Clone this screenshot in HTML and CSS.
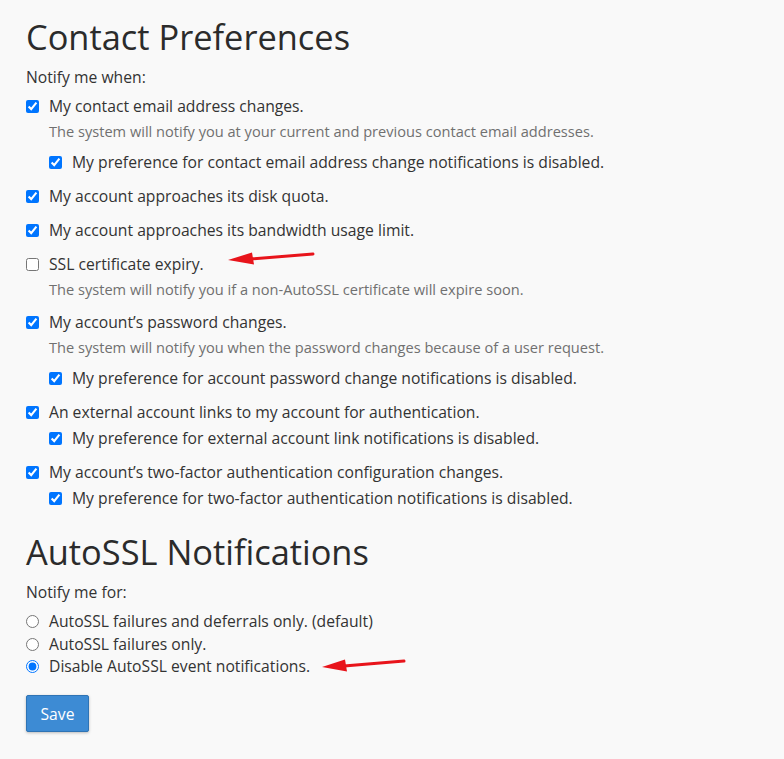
FILE: index.html
```html
<!DOCTYPE html>
<html>
<head>
<meta charset="utf-8">
<link rel="stylesheet" href="styles.css">
</head>
<body>
<div class="page">
  <h2 class="title">Contact Preferences</h2>
  <p class="lead">Notify me when:</p>

  <div class="group">
    <label class="opt"><input type="checkbox" checked> My contact email address changes.</label>
    <p class="desc">The system will notify you at your current and previous contact email addresses.</p>
    <label class="opt sub"><input type="checkbox" checked> My preference for contact email address change notifications is disabled.</label>
  </div>

  <div class="group">
    <label class="opt"><input type="checkbox" checked> My account approaches its disk quota.</label>
  </div>

  <div class="group">
    <label class="opt"><input type="checkbox" checked> My account approaches its bandwidth usage limit.</label>
  </div>

  <div class="group rel">
    <label class="opt"><input type="checkbox"> SSL certificate expiry.</label>
    <p class="desc last">The system will notify you if a non-AutoSSL certificate will expire soon.</p>
    <svg class="arrow arrow1" width="90" height="14" viewBox="0 0 90 14"><path d="M86 3 L24 8" stroke="#e8141b" stroke-width="3" stroke-linecap="round" fill="none"/><path d="M1 9 L25 1.5 L27 13.5 Z" fill="#e8141b"/></svg>
  </div>

  <div class="group">
    <label class="opt"><input type="checkbox" checked> My account’s password changes.</label>
    <p class="desc">The system will notify you when the password changes because of a user request.</p>
    <label class="opt sub"><input type="checkbox" checked> My preference for account password change notifications is disabled.</label>
  </div>

  <div class="group">
    <label class="opt"><input type="checkbox" checked> An external account links to my account for authentication.</label>
    <label class="opt sub tight"><input type="checkbox" checked> My preference for external account link notifications is disabled.</label>
  </div>

  <div class="group">
    <label class="opt"><input type="checkbox" checked> My account’s two-factor authentication configuration changes.</label>
    <label class="opt sub tight"><input type="checkbox" checked> My preference for two-factor authentication notifications is disabled.</label>
  </div>

  <h2 class="title title2">AutoSSL Notifications</h2>
  <p class="lead">Notify me for:</p>
  <div class="radios">
    <label class="ropt"><input type="radio" name="a"> AutoSSL failures and deferrals only. (default)</label>
    <label class="ropt"><input type="radio" name="a"> AutoSSL failures only.</label>
    <label class="ropt rel"><input type="radio" name="a" checked> Disable AutoSSL event notifications.
      <svg class="arrow arrow2" width="86" height="14" viewBox="0 0 86 14"><path d="M82 3 L22 8" stroke="#e8141b" stroke-width="3" stroke-linecap="round" fill="none"/><path d="M0 9 L23 1.5 L25 13.5 Z" fill="#e8141b"/></svg>
    </label>
  </div>
  <button class="save">Save</button>
</div>
</body>
</html>
```
FILE: styles.css
```css
html, body {
  margin: 0;
  padding: 0;
  background: #f9f9f9;
}
body {
  font-family: "Open Sans", "Liberation Sans", sans-serif;
  color: #333;
}
.page {
  padding: 15px 26px 20px 26px;
}
.title {
  font-size: 34.4px;
  font-weight: 400;
  line-height: 44px;
  margin: 0 0 8px 0;
  color: #2b2b2b;
}
.title2 {
  margin-top: 21px;
}
.lead {
  font-size: 15.7px;
  line-height: 20px;
  margin: 0 0 9px 0;
}
.group {
  margin-bottom: 13px;
}
.rel { position: relative; }
.opt {
  display: flex;
  align-items: center;
  font-size: 15.7px;
  line-height: 21px;
  height: 21px;
  white-space: nowrap;
}
.opt input, .ropt input {
  margin: 0 10px 0 0;
  width: 13px;
  height: 13px;
  flex: none;
}
.sub {
  margin-left: 23px;
}
.tight {
  margin-top: 5px;
}
.desc {
  font-size: 14.6px;
  line-height: 20px;
  color: #707070;
  margin: 4px 0 11px 23px;
  white-space: nowrap;
}
.desc.last {
  margin-bottom: 0;
}
.radios {
  display: flex;
  flex-direction: column;
  gap: 1.5px;
}
.ropt {
  display: flex;
  align-items: center;
  font-size: 15.7px;
  line-height: 21px;
  height: 21px;
  white-space: nowrap;
}
.arrow {
  position: absolute;
}
.arrow1 {
  left: 201px;
  top: -3px;
}
.arrow2 {
  left: 296px;
  top: 2px;
}
.save {
  margin-top: 18px;
  font-family: "Open Sans", "Liberation Sans", sans-serif;
  font-size: 15.7px;
  color: #fff;
  background: #3d8bd4;
  border: 1px solid #2f74b5;
  border-radius: 2px;
  width: 63px;
  height: 37px;
  padding: 0;
  box-shadow: 0 1px 3px rgba(0,0,0,0.25);
}
```
